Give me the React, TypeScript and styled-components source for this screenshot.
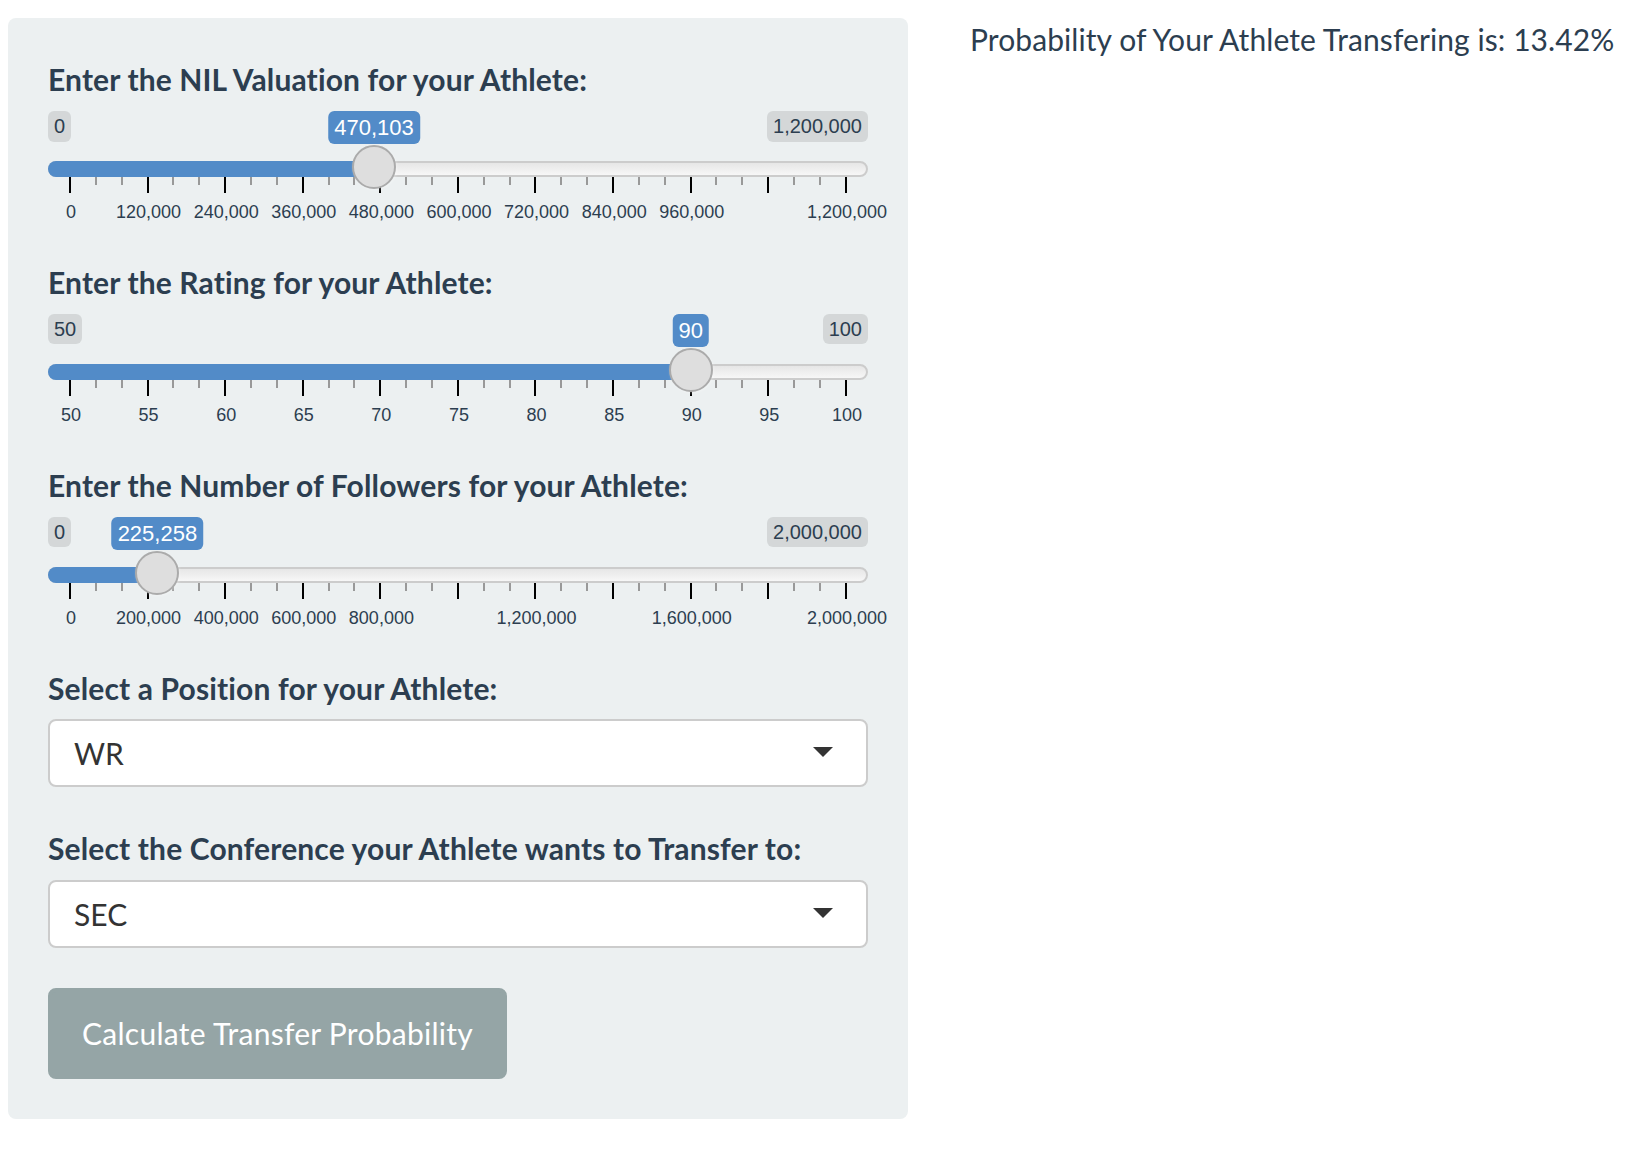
import React from 'react';
import styled, { createGlobalStyle } from 'styled-components';

const GlobalStyle = createGlobalStyle`
  html, body { margin: 0; padding: 0; background: #ffffff; }
  body { font-family: Lato, "Noto Sans", sans-serif; color: #2c3e50; }
  *, *::before, *::after { box-sizing: border-box; }
`;

const Page = styled.div`
  display: flex;
  align-items: flex-start;
  gap: 62px;
  padding: 18px 0 0 8px;
`;

const Sidebar = styled.form`
  flex: none;
  width: 900px;
  display: flex;
  flex-direction: column;
  padding: 40px;
  background: #ecf0f1;
  border-radius: 8px;
`;

const FormGroup = styled.div<{ $spacing: number }>`
  margin-bottom: ${(p) => p.$spacing}px;
`;

const FieldLabel = styled.label`
  display: block;
  margin-bottom: 10px;
  font-size: 30px;
  font-weight: 700;
  line-height: 42.86px;
  letter-spacing: 0.14px;
  color: #2c3e50;
`;

/* ---------- slider ---------- */
const SliderRoot = styled.div`
  position: relative;
  height: 120px;
  font-family: "Liberation Sans", Arial, sans-serif;
`;

const EdgeRow = styled.div`
  display: flex;
  justify-content: space-between;
  align-items: flex-start;
  height: 50px;
`;

const EdgeBadge = styled.span`
  padding: 2px 6px;
  font-size: 20px;
  line-height: 26.67px;
  color: #2c3e50;
  background: rgba(0, 0, 0, 0.1);
  border-radius: 6px;
`;

const ValueBadge = styled.span`
  position: absolute;
  top: 0;
  transform: translateX(-50%);
  padding: 2px 6px;
  font-size: 22px;
  line-height: 29.33px;
  white-space: nowrap;
  color: #ffffff;
  background: #528bc8;
  border-radius: 6px;
`;

const TrackLine = styled.div`
  position: relative;
  height: 16px;
  border: 2px solid #cccccc;
  border-radius: 16px;
  background-color: #ededed;
  background: linear-gradient(to bottom, #dedede -50%, #ffffff 150%);
`;

const TrackBar = styled.div`
  height: 16px;
  margin: -2px 0 0 -2px;
  background: #528bc8;
  border-radius: 16px 0 0 16px;
`;

const Handle = styled.span`
  position: absolute;
  top: -18px;
  width: 44px;
  height: 44px;
  border: 2px solid #ababab;
  border-radius: 50%;
  background: #dedede;
  box-shadow: 1px 1px 3px rgba(255, 255, 255, 0.3);
`;

const TickRow = styled.div`
  display: flex;
  justify-content: space-between;
  align-items: flex-start;
  height: 26px;
  padding: 0 21px;
`;

const Tick = styled.span<{ $major: boolean }>`
  flex: none;
  width: 2px;
  height: ${(p) => (p.$major ? 16 : 8)}px;
  background: ${(p) => (p.$major ? '#000000' : '#999999')};
`;

const TickLabels = styled.div`
  display: flex;
  justify-content: space-between;
  height: 28px;
  padding: 0 21px 0 23px;
`;

const TickLabel = styled.span`
  flex: none;
  width: 0;
  min-width: 0;
  display: flex;
  justify-content: center;
  white-space: nowrap;
  font-size: 18px;
  line-height: 18px;
  color: #2c3e50;
`;

/* ---------- select ---------- */
const SelectBox = styled.div`
  position: relative;
  height: 68px;
  padding: 12px 24px;
  border: 2px solid #cccccc;
  border-radius: 8px;
  background: #ffffff;
  font-size: 30px;
  line-height: 40px;
  color: #333333;

  &::after {
    content: '';
    position: absolute;
    top: 50%;
    right: 33px;
    margin-top: -6px;
    border-style: solid;
    border-width: 10px 10px 0 10px;
    border-color: #333333 transparent transparent transparent;
  }
`;

const SubmitButton = styled.button`
  align-self: flex-start;
  padding: 20px 30px;
  font-family: inherit;
  font-size: 30px;
  line-height: 42.86px;
  letter-spacing: 0.27px;
  color: #ffffff;
  background: #95a5a6;
  border: 4px solid #95a5a6;
  border-radius: 8px;
  cursor: pointer;
`;

const Main = styled.div`
  flex: 1;
`;

const Result = styled.div`
  font-size: 30px;
  line-height: 42.86px;
  letter-spacing: 0.08px;
  color: #2c3e50;
  white-space: nowrap;
`;

const fmt = (n: number) => n.toLocaleString('en-US');

const GRID_START = 22;
const GRID_SPAN = 776;

interface SliderProps {
  min: number;
  max: number;
  value: number;
  hidden?: number[];
}

function Slider({ min, max, value, hidden = [] }: SliderProps) {
  const frac = (value - min) / (max - min);
  const center = GRID_START + frac * GRID_SPAN;
  const ticks = Array.from({ length: 31 }, (_, i) => i % 3 === 0);
  const labels = Array.from({ length: 11 }, (_, i) => min + ((max - min) * i) / 10);
  return (
    <SliderRoot>
      <EdgeRow>
        <EdgeBadge>{fmt(min)}</EdgeBadge>
        <EdgeBadge>{fmt(max)}</EdgeBadge>
      </EdgeRow>
      <ValueBadge style={{ left: center }}>{fmt(value)}</ValueBadge>
      <TrackLine>
        <TrackBar style={{ width: center + 2 }} />
        <Handle style={{ left: center - 24 }} />
      </TrackLine>
      <TickRow>
        {ticks.map((major, i) => (
          <Tick key={i} $major={major} />
        ))}
      </TickRow>
      <TickLabels>
        {labels.map((v, i) => (
          <TickLabel key={i}>{hidden.includes(i) ? '' : fmt(v)}</TickLabel>
        ))}
      </TickLabels>
    </SliderRoot>
  );
}

export default function App() {
  return (
    <>
      <GlobalStyle />
      <Page>
        <Sidebar onSubmit={(e) => e.preventDefault()}>
          <FormGroup $spacing={30}>
            <FieldLabel>Enter the NIL Valuation for your Athlete:</FieldLabel>
            <Slider min={0} max={1200000} value={470103} hidden={[9]} />
          </FormGroup>
          <FormGroup $spacing={30}>
            <FieldLabel>Enter the Rating for your Athlete:</FieldLabel>
            <Slider min={50} max={100} value={90} />
          </FormGroup>
          <FormGroup $spacing={30}>
            <FieldLabel>Enter the Number of Followers for your Athlete:</FieldLabel>
            <Slider min={0} max={2000000} value={225258} hidden={[5, 7, 9]} />
          </FormGroup>
          <FormGroup $spacing={40}>
            <FieldLabel>Select a Position for your Athlete:</FieldLabel>
            <SelectBox>WR</SelectBox>
          </FormGroup>
          <FormGroup $spacing={40}>
            <FieldLabel>Select the Conference your Athlete wants to Transfer to:</FieldLabel>
            <SelectBox>SEC</SelectBox>
          </FormGroup>
          <SubmitButton type="submit">Calculate Transfer Probability</SubmitButton>
        </Sidebar>
        <Main>
          <Result>Probability of Your Athlete Transfering is: 13.42%</Result>
        </Main>
      </Page>
    </>
  );
}
